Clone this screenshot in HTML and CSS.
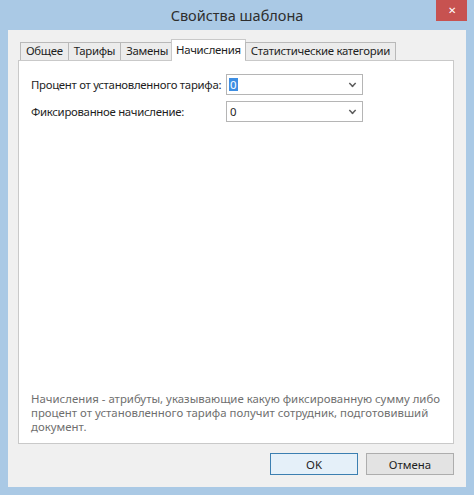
FILE: index.html
```html
<!DOCTYPE html>
<html lang="ru">
<head>
<meta charset="utf-8">
<title>Свойства шаблона</title>
<link rel="stylesheet" href="styles.css">
</head>
<body>

<div class="window">
  <div class="titlebar">
    <span></span>
    <span class="title">Свойства шаблона</span>
    <span class="close">&#x2715;</span>
  </div>

  <div class="client">
    <div class="tabs">
      <span class="tab">Общее</span>
      <span class="tab">Тарифы</span>
      <span class="tab">Замены</span>
      <span class="tab active">Начисления</span>
      <span class="tab">Статистические категории</span>
    </div>

    <div class="page">
      <div class="fields">
        <label>Процент от установленного тарифа:</label>
        <div class="combo"><span class="value sel">0</span><span class="arrow"></span></div>
        <label>Фиксированное начисление:</label>
        <div class="combo"><span class="value">0</span><span class="arrow"></span></div>
      </div>
      <p class="hint">Начисления - атрибуты, указывающие какую фиксированную сумму либо процент от установленного тарифа получит сотрудник, подготовивший документ.</p>
    </div>

    <div class="buttons">
      <button class="btn default">OK</button>
      <button class="btn">Отмена</button>
    </div>
  </div>
</div>

</body>
</html>
```

FILE: styles.css
```css
*{margin:0;padding:0;box-sizing:border-box;}
body{font-family:"Noto Sans","Liberation Sans",sans-serif;font-size:11.4px;color:#1e1e1e;background:#fff;}

.window{width:474px;height:495px;background:#aac9e5;display:flex;flex-direction:column;}

.titlebar{height:31px;display:grid;grid-template-columns:1fr auto 1fr;align-items:start;}
.title{font-size:14.5px;color:#2e2e2e;line-height:20px;padding-top:5px;}
.close{justify-self:end;width:31px;height:21px;margin-right:7px;background:#c75250;color:#fff;font-size:10px;line-height:21px;text-align:center;}

.client{flex:1;margin:0 8px 8px;background:#f0f0f0;display:flex;flex-direction:column;padding:9px 12px 12px 10px;}

.tabs{display:flex;align-items:flex-end;height:21px;padding-left:2px;position:relative;z-index:1;}
.tab{height:18px;line-height:16px;padding:0 5px;border:1px solid #b9b9b9;border-bottom:none;background:#ececec;margin-right:-1px;white-space:nowrap;letter-spacing:-.3px;}
.tab.active{height:22px;line-height:19px;background:#fff;margin:0 -1px -1px -2px;padding:0 4px;border-color:#c9c9c9;}

.page{height:384px;background:#fff;border:1px solid #c9c9c9;display:flex;flex-direction:column;padding:13px 12px 9px;}

.fields{display:grid;grid-template-columns:195px 137px;row-gap:6px;align-items:center;}
.fields label{line-height:21px;white-space:nowrap;letter-spacing:-.3px;}
.combo{height:21px;border:1px solid #b5b5b5;background:#fff;display:flex;align-items:center;padding:0 6px 0 2px;}
.value{line-height:13px;padding:0 1px;}
.value.sel{background:#3d8ee3;color:#fff;}
.arrow{margin-left:auto;width:7px;height:7px;border-right:2px solid #5a5a5a;border-bottom:2px solid #5a5a5a;transform:rotate(45deg) scale(.75,.75);margin-top:-3px;}

.hint{margin-top:auto;color:#6f6f6f;line-height:14px;}

.buttons{display:flex;justify-content:flex-end;gap:8px;margin-top:9px;}
.btn{width:88px;height:22px;font-family:inherit;font-size:11.4px;color:#1e1e1e;background:#e3e3e3;border:1px solid #adadad;}
.btn.default{border-color:#3c7fb1;background:#e5f0f9;}
```
